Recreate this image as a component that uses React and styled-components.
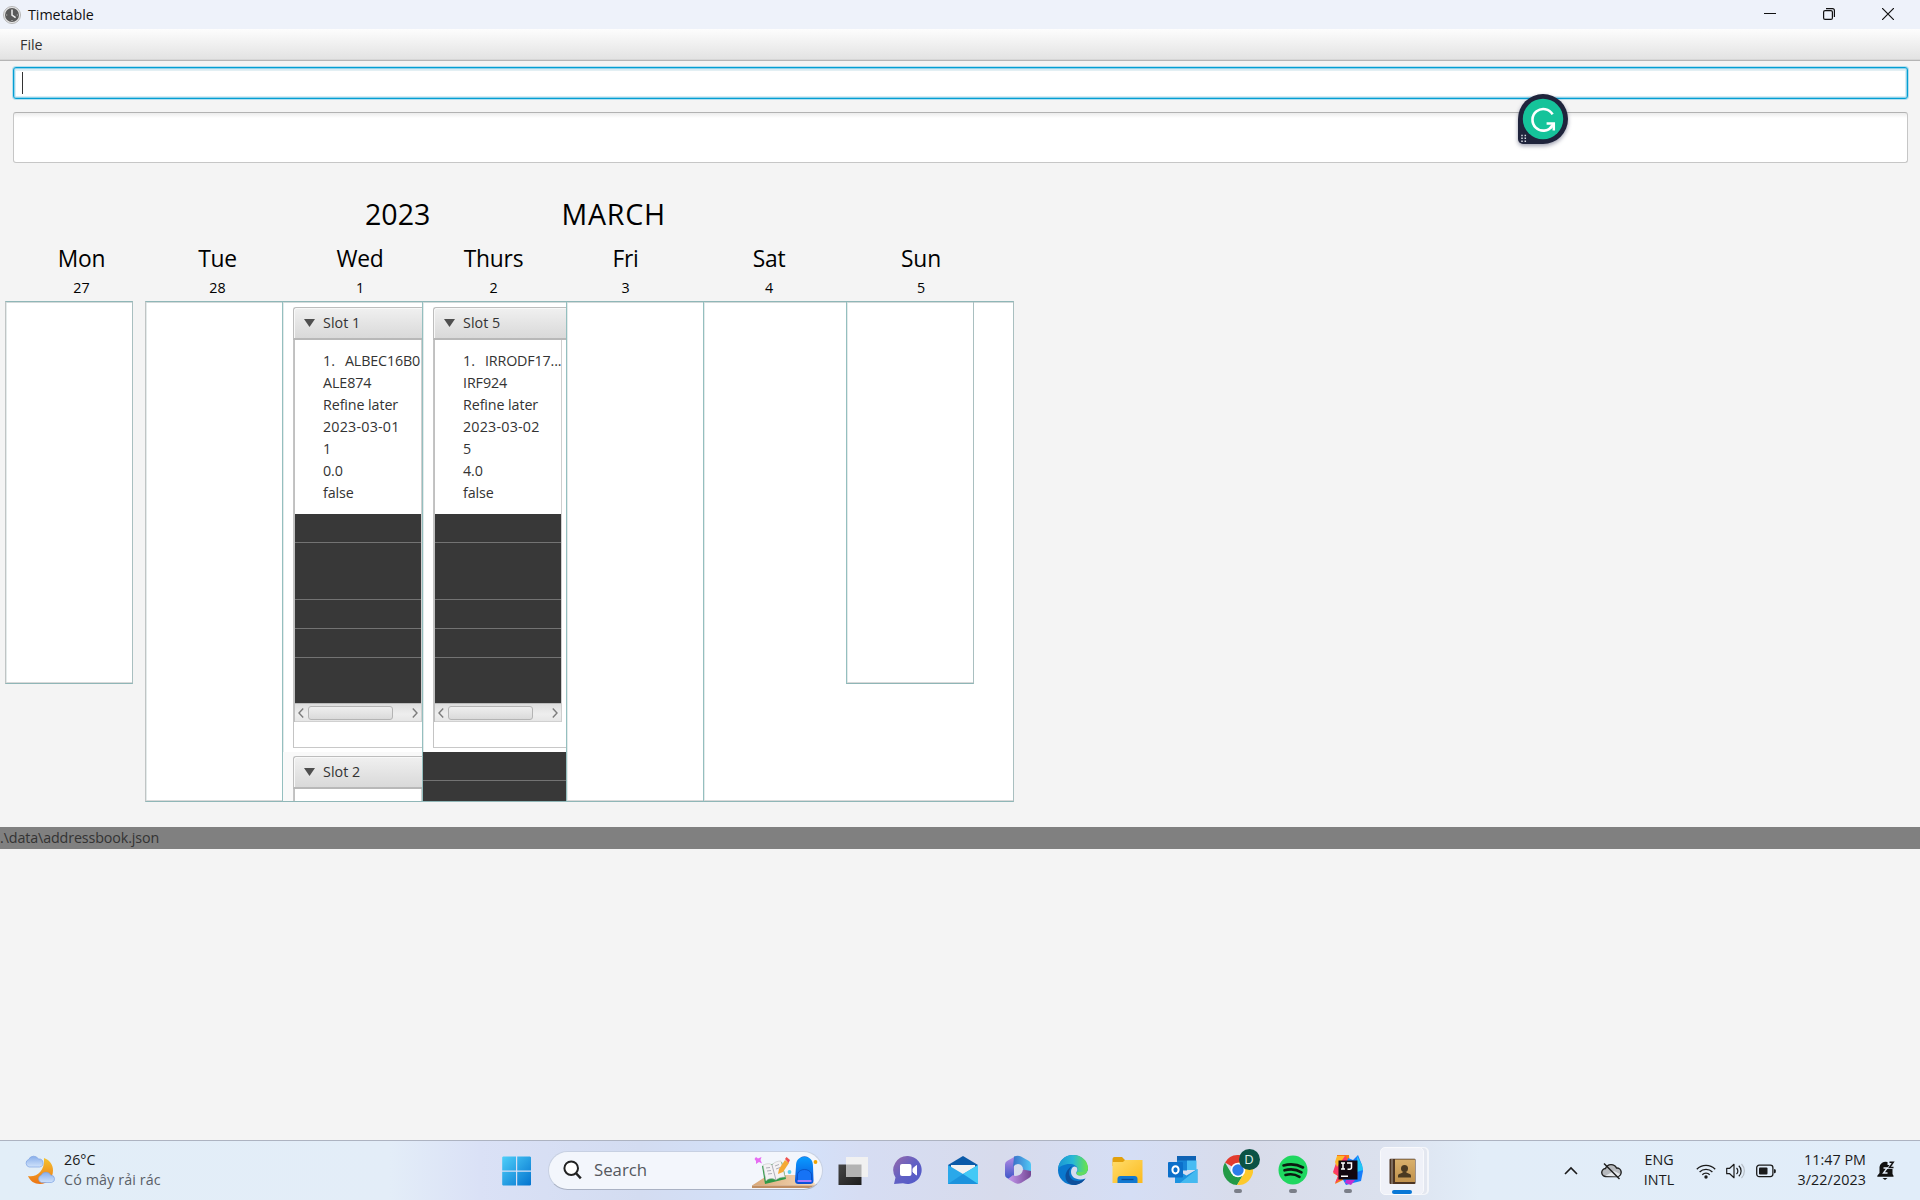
import React from "react";
import styled, { createGlobalStyle } from "styled-components";

const GlobalStyle = createGlobalStyle`
  * { box-sizing: border-box; }
  html, body { margin: 0; padding: 0; }
  body {
    background: #f4f4f4;
    font-family: "Open Sans", "Noto Sans", sans-serif;
    overflow: hidden;
  }
  svg { display: block; flex: none; }
`;

const Screen = styled.div`
  width: 1920px;
  height: 1200px;
  display: flex;
  flex-direction: column;
  background: #f4f4f4;
  color: #333;
`;

const Label = styled.span`
  font-size: ${(p) => p.$size || 14.3}px;
  letter-spacing: ${(p) => p.$ls || 0}px;
  line-height: ${(p) => p.$lh || 22}px;
  color: ${(p) => p.$color || "inherit"};
  white-space: pre;
`;

/* window chrome */
const TitleBar = styled.header`
  height: 29px;
  flex: none;
  display: flex;
  align-items: center;
  padding-left: 3px;
  gap: 7px;
  background: #eef2fa;
`;
const WindowButtons = styled.div`
  display: flex;
  gap: 47px;
  margin-left: auto;
  padding: 0 26px 1px 0;
  align-items: center;
`;
const MenuBar = styled.nav`
  height: 32px;
  flex: none;
  padding: 4px 20px 0;
  background: linear-gradient(#fdfdfd, #e2e2e2);
  border-bottom: 1px solid #b5b5b5;
  box-shadow: inset 0 -1px #d6d6d6;
`;
const CommandField = styled.div`
  height: 32px;
  flex: none;
  margin: 6px 12px 0 13px;
  padding: 4px 8px;
  border: 1px solid #039ed3;
  border-radius: 3px;
  background: #fff;
  box-shadow: 0 0 0 1px #b5dfee, inset 0 0 0 1px #8fd3ea, inset 0 0 0 2px #d9edf5,
    inset 0 3px 0 #e3eff3;
`;
const Caret = styled.div`
  width: 1px;
  height: 22px;
  background: #333;
`;
const ResultBox = styled.div`
  position: relative;
  height: 51px;
  flex: none;
  margin: 13px 12px 0 13px;
  border: 1px solid #c6c6c6;
  border-top-color: #b2b2b2;
  border-radius: 3px;
  background: linear-gradient(#ececec, #fff 5px);
`;
const AssistantBadge = styled.div`
  position: absolute;
  left: 1504px;
  top: -19px;
  filter: drop-shadow(0 2px 2px rgba(40, 45, 80, 0.45));
`;

/* calendar */
const Calendar = styled.main`
  height: 664px;
  flex: none;
  padding-top: 31px;
`;
const MonthRow = styled.div`
  display: flex;
  height: 50px;
  padding-left: 365px;
  gap: 131px;
  color: #000;
`;
const DayHeadings = styled.div`
  display: grid;
  grid-template-columns: 163px 109px 176px 91px 173px 114px 190px;
  height: 57px;
  color: #000;
`;
const DayHeading = styled.div`
  display: flex;
  flex-direction: column;
  align-items: center;
  gap: 3px;
`;
const Week = styled.div`
  display: flex;
  align-items: flex-start;
  padding-left: 5px;
`;
const DayList = styled.div`
  width: ${(p) => p.$w}px;
  height: ${(p) => (p.$short ? 383 : 501)}px;
  flex: none;
  overflow: hidden;
  margin-right: ${(p) => p.$gap || 0}px;
  padding-left: ${(p) => p.$pad || 0}px;
  background: #fff;
  border: 1px solid #8fb6b7;
  border-left-color: ${(p) => (p.$grey ? "#c0c4c4" : "#94bfbf")};
  border-right: ${(p) => (p.$end ? "1px solid #a9bfc0" : "none")};
  box-shadow: inset 0 1px #d3dada, inset 0 -1px #d9d9d9, inset 1px 0 #e3eaea;
`;
const SundaySlot = styled.div`
  margin-top: -1px;
`;
const Cell = styled.div`
  height: 450px;
  padding: 5px 0 0 10px;
`;
const NextCell = styled(Cell)`
  height: 60px;
  background: #f9f9f9;
  padding-top: 4px;
`;
const PaneTitle = styled.div`
  height: 33px;
  display: flex;
  align-items: center;
  gap: 8px;
  padding: 0 0 0 10px;
  border: 1px solid #bdbdbd;
  border-right: none;
  border-bottom: 2px solid #b8b8b8;
  border-radius: 3px 0 0 0;
  background: linear-gradient(#f0f0f0, #d9d9d9);
  box-shadow: inset 1px 1px #f8f8f8;
`;
const PaneBody = styled.div`
  height: ${(p) => p.$h || 408}px;
  border-left: 1px solid #c4c4c4;
  border-bottom: 1px solid #c8c8c8;
  background: #fff;
`;
const LessonList = styled.div`
  width: ${(p) => p.$w}px;
  border-left: 1px solid #c0c0c0;
  border-right: 1px solid #cfcfcf;
`;
const Lesson = styled.div`
  height: 174px;
  padding: 10px 0 0 28px;
  display: flex;
  flex-direction: column;
  overflow: hidden;
`;
const Course = styled.div`
  display: flex;
  gap: 10px;
`;
const DarkRow = styled.div`
  height: ${(p) => p.$h}px;
  background: #383838;
  border-bottom: ${(p) => (p.$last ? "none" : "1px solid #737373")};
`;
const ScrollTrack = styled.div`
  height: 19px;
  display: flex;
  align-items: center;
  padding: 0 3px;
  background: linear-gradient(#dedede, #eeeeee 60%, #e6e6e6);
  border-top: 1px solid #bbb;
  border-bottom: 1px solid #d0d0d0;
`;
const Thumb = styled.div`
  width: 85px;
  height: 14px;
  margin: 0 auto 0 4px;
  border: 1px solid #b4b4b4;
  border-radius: 3px;
  background: linear-gradient(#efefef, #dadada);
`;
const StatusBar = styled.footer`
  height: 22px;
  flex: none;
  background: #808080;
  display: flex;
`;

/* taskbar */
const Taskbar = styled.div`
  height: 60px;
  margin-top: auto;
  flex: none;
  display: flex;
  align-items: center;
  border-top: 1px solid #adb3c1;
  background: linear-gradient(
    90deg, #e2eef8 0, #e3edf8 390px, #dae1f6 480px, #d3dcf1 640px, #d3e2fb 790px,
    #d6ddf3 860px, #d7dbec 1000px, #d5def5 1130px, #d8dcea 1250px, #dbe1ee 1380px,
    #e2edf8 1480px, #e1edf9 1920px
  );
  color: #1b1b1b;
`;
const Weather = styled.div`
  width: 477px;
  display: flex;
  align-items: center;
  gap: 8px;
  padding: 0 0 2px 25px;
  margin-right: 25px;
`;
const Stack = styled.div`
  display: flex;
  flex-direction: column;
  align-items: ${(p) => p.$align || "flex-start"};
  width: ${(p) => (p.$w ? p.$w + "px" : "auto")};
  padding-bottom: ${(p) => (p.$w ? 2 : 0)}px;
`;
const SearchPill = styled.div`
  width: 275px;
  height: 39px;
  margin: 0 15px 1px 16px;
  padding-left: 14px;
  display: flex;
  align-items: center;
  gap: 12px;
  overflow: hidden;
  border-radius: 20px;
  border: 1px solid #c7d0e2;
  border-bottom-color: #aab2c4;
  background: #f3f6fc;
`;
const SearchArt = styled.div`
  margin-left: auto;
  align-self: flex-end;
`;
const Apps = styled.div`
  display: flex;
  align-items: center;
`;
const AppSlot = styled.div`
  width: 55px;
  height: 48px;
  display: flex;
  flex-direction: column;
  align-items: center;
  padding-top: 8px;
  gap: 4px;
`;
const RunDot = styled.div`
  width: 8px;
  height: 4px;
  border-radius: 2px;
  background: #7b7f89;
`;
const ActiveTile = styled.div`
  width: 44px;
  height: 48px;
  margin-left: 5px;
  display: flex;
  flex-direction: column;
  align-items: center;
  padding-top: 10px;
  border-radius: 5px;
  border: 1px solid #f8f9fc;
  background: #eff1f8;
  box-shadow: 4px 0 0 -1px #e3e7f0, 5px 0 0 0 #f4f6fa;
`;
const ActiveBar = styled.div`
  width: 20px;
  height: 4px;
  margin-top: auto;
  border-radius: 2px;
  background: #0877d6;
`;
const Tray = styled.div`
  margin-left: auto;
  padding-right: 25px;
  display: flex;
  align-items: center;
`;
const Gap = styled.div`
  width: ${(p) => p.$w}px;
`;

const ClockIcon = () => (
  <svg width="18" height="18" viewBox="0 0 18 18">
    <circle cx="9" cy="9" r="8.5" fill="#e9e9e9" stroke="#b4b4b4" />
    <circle cx="9" cy="9" r="7" fill="#5a5a5a" />
    <path d="M9 3.5V9l3.6 2.6" fill="none" stroke="#eee" strokeWidth="1.5" />
    <path d="M3.2 9h1M13.8 9h1M9 14v1" stroke="#ccc" />
  </svg>
);

const GrammarlyIcon = () => (
  <svg width="50" height="50" viewBox="0 0 50 50">
    <path d="M25 0a25 25 0 0 1 0 50H5a5 5 0 0 1-5-5V25A25 25 0 0 1 25 0z" fill="#1f243c" />
    <circle cx="25" cy="25" r="20.2" fill="#15c39a" />
    <path d="M34.6 20.4A10.8 10.8 0 1 0 34 32.2" fill="none" stroke="#fff" strokeWidth="2.6" />
    <path d="M28.6 29.6h7.2v6.8" fill="none" stroke="#fff" strokeWidth="2.5" />
    <path d="M35.4 30l-3.2 4" stroke="#fff" strokeWidth="2.5" />
    <path d="M4 40.7v8M7.3 40.7v8" stroke="#d8dae2" strokeWidth="1.5" strokeDasharray="1.5 1.4" />
  </svg>
);

const Arrow = () => (
  <svg width="11" height="8" viewBox="0 0 11 8"><path d="M0 0h11L5.5 8z" fill="#4f4f4f" /></svg>
);
const Chev = ({ right }) => (
  <svg width="6" height="10" viewBox="0 0 6 10">
    <path d={right ? "M.8 .5L5 5 .8 9.5" : "M5.2 .5L1 5l4.2 4.5"} fill="none" stroke="#7d7d7d" strokeWidth="1.4" />
  </svg>
);

const WeatherIcon = () => (
  <svg width="31" height="30" viewBox="0 0 31 30">
    <defs>
      <linearGradient id="moon" x1="0" y1="0" x2="0" y2="1"><stop offset="0" stopColor="#f5c331" /><stop offset="1" stopColor="#ec7414" /></linearGradient>
      <linearGradient id="cloud" x1="0" y1="0" x2="0" y2="1"><stop offset="0" stopColor="#88aeea" /><stop offset="1" stopColor="#cfe2fb" /></linearGradient>
    </defs>
    <path d="M19 3c6 2 9 7 9 12.500c0 8-6 13.500-13 13.500-5.500 0-10-3-12-8 8 1.500 17-4 16-18z" fill="url(#moon)" />
    <path d="M4 12a4 4 0 0 1-.3-7.600 5.500 5.500 0 0 1 9.800-.4 3.800 3.800 0 0 1 1 8z" fill="url(#cloud)" stroke="#7fa4e2" strokeWidth=".7" />
    <path d="M16.500 27.500a3.800 3.800 0 0 1-.3-7.300 5.300 5.300 0 0 1 9.500 0 3.700 3.700 0 0 1 1 7.300z" fill="url(#cloud)" stroke="#7fa4e2" strokeWidth=".7" />
  </svg>
);

const StartIcon = () => (
  <svg width="30" height="30" viewBox="0 0 30 30">
    <defs><linearGradient id="win" gradientUnits="userSpaceOnUse" x1="0" y1="0" x2="29" y2="29"><stop offset="0" stopColor="#4fd0fa" /><stop offset="1" stopColor="#0474cf" /></linearGradient></defs>
    <path d="M1 .5h13V14.500H.2V1.300zM15.200 .5H28l1 .8V14.500H15.200zM.2 15.700H14V29.500H1l-.8-.8zM15.200 15.700H29v13l-.8.8h-13z" fill="url(#win)" />
  </svg>
);

const SearchIcon = () => (
  <svg width="19" height="20" viewBox="0 0 19 20">
    <circle cx="8.200" cy="8.200" r="6.800" fill="#fff" stroke="#222" strokeWidth="2" />
    <path d="M12.800 13l5 5.300" stroke="#222" strokeWidth="2.500" />
  </svg>
);

const StudyArt = () => (
  <svg width="70" height="37" viewBox="0 0 70 37">
    <defs>
      <linearGradient id="desk"><stop offset="0" stopColor="#d9a877" /><stop offset="1" stopColor="#f6dcbc" /></linearGradient>
      <linearGradient id="bag" x1="0" y1="0" x2="0" y2="1"><stop offset="0" stopColor="#0a9bff" /><stop offset="1" stopColor="#0a4fd8" /></linearGradient>
    </defs>
    <path d="M0 33.500L16 23h38l11 10.500z" fill="url(#desk)" />
    <path d="M0 33.500h64l-4 2.500H0z" fill="#c08e62" />
    <path d="M10 14l20-4 4 17-21 5z" fill="#2f9a48" />
    <path d="M11 13c4-1.500 7-2 9 0 2-3 6-4 9-4l4 16c-4 0-7 1-9 3-4-2-7-2-10 1z" fill="#f4f2f4" stroke="#bbb" strokeWidth=".5" />
    <path d="M20 13l4 15M14 16l4-.5M15 19l4-.5M16 22l4-.5M23 14l4-1.500M24 17l4-1.500" stroke="#9c9ca8" strokeWidth=".8" />
    <path d="M26 22l1-5 6-9 4 3-6 9z" fill="#f5a935" /><path d="M33 7l1.500-2 3.500 3-1.500 3z" fill="#ef5350" />
    <path d="M4 5l2 1.500L9.500 5l-1 3 1.500 3.500L7 10l-3 2v-3L2.500 7z" fill="#e66cf2" />
    <path d="M48 8a5 5 0 0 1 9 0" fill="none" stroke="#2c67c9" strokeWidth="2" />
    <path d="M44 14c0-6 3-9 8.500-9s8.500 3 8.500 9l.5 14c0 3-1 4-4 4H47c-3 0-4-1-4-4z" fill="url(#bag)" />
    <path d="M45.500 22c2-6 12-6 14 0v7h-14z" fill="#1673f5" stroke="#0747b8" strokeWidth=".7" />
    <path d="M45.500 29h14" stroke="#a67cff" strokeWidth="2" />
    <circle cx="37.500" cy="20" r="1.900" fill="#59d0ec" /><circle cx="63.500" cy="10" r="1.900" fill="#f2a500" />
  </svg>
);

const TaskViewIcon = () => (
  <svg width="31" height="30" viewBox="0 0 31 30">
    <defs><linearGradient id="tv" x2="1" y2="1"><stop offset="0" stopColor="#454545" /><stop offset="1" stopColor="#1d1d1d" /></linearGradient></defs>
    <path d="M.5 8.500h23V29H.5z" fill="url(#tv)" />
    <path d="M8 1h22v20H8z" fill="#f1f1f1" />
    <path d="M8 8.500h15.500V21H8z" fill="#b3b3b3" />
  </svg>
);
const TeamsIcon = () => (
  <svg width="30" height="30" viewBox="0 0 30 30">
    <defs><linearGradient id="chat" x1="0" y1="0" x2="1" y2="1"><stop offset="0" stopColor="#9a6aa9" /><stop offset=".5" stopColor="#6160c4" /><stop offset="1" stopColor="#5059c9" /></linearGradient></defs>
    <path d="M15 1a14 14 0 1 1-5 27.200L1 29l1.500-6.500A14 14 0 0 1 15 1z" fill="url(#chat)" />
    <rect x="7" y="9" width="11.500" height="12" rx="2" fill="#fff" /><path d="M20 13.500l3.500-3v9.500L20 17z" fill="#fff" stroke="#fff" />
  </svg>
);
const MailIcon = () => (
  <svg width="30" height="30" viewBox="0 0 30 30">
    <path d="M0 10L15 1l15 9v6H0z" fill="#0b5aa8" /><path d="M3 10h24v7l-12 5-12-5z" fill="#f2f2f2" />
    <path d="M0 10l15 9 15-9v19H0z" fill="#2aa8ea" /><path d="M30 10L15 19l15 10z" fill="#43c9f6" /><path d="M0 29L15 19l15 10z" fill="#1687d6" opacity=".65" />
  </svg>
);
const OfficeIcon = () => (
  <svg width="28" height="30" viewBox="0 0 28 30">
    <defs>
      <linearGradient id="o1" x1="0" y1="0" x2="0" y2="1"><stop offset="0" stopColor="#b78be4" /><stop offset="1" stopColor="#3a55c8" /></linearGradient>
      <linearGradient id="o2"><stop offset="0" stopColor="#3a72c9" /><stop offset="1" stopColor="#50c8f5" /></linearGradient>
      <linearGradient id="o3"><stop offset="0" stopColor="#c69af0" /><stop offset="1" stopColor="#744693" /></linearGradient>
    </defs>
    <path d="M11 1.500L3 6Q1 7 1 9.500V20q0 2 2 3l3 1.500 4-3V10z" fill="url(#o1)" />
    <path d="M10 1.500Q14 0 17 1.500L25 6q2 1 2 3.500V18l-8-3.500q0-5-5-5.500-3 0-5 3z" fill="url(#o2)" />
    <path d="M27 16v4q0 2-2 3l-8 5q-3 1.500-6 0l-7-4 5-4q2 1.500 5 .5 4-1 5-6z" fill="url(#o3)" />
  </svg>
);
const EdgeIcon = () => (
  <svg width="30" height="30" viewBox="0 0 30 30">
    <defs><linearGradient id="e1"><stop offset="0" stopColor="#1b96d4" /><stop offset=".5" stopColor="#28b9d6" /><stop offset="1" stopColor="#6be544" /></linearGradient></defs>
    <circle cx="15" cy="15" r="15" fill="#0a78ce" />
    <path d="M0 14C1 5 7 0 15 0c9 0 15 6 15 13 0 5-4 7.500-8 7.500-3 0-4.500-1.500-3-3.500 2-4-1-7.500-6-8C7 8.500 2 11 0 14z" fill="url(#e1)" />
    <path d="M12 14c-3 7 2 13 9 12 3-.3 5-1.500 6.500-2.500C24 29 18 31 13 29.500 5 26 6 16 14 11z" fill="#0d4f9b" />
    <path d="M15 12c3-2 6 2 3.500 5-1.500 4 5 4.500 9.500 1.500L30 15v7l-2.500 1.500C20 26 13 23 13 17c0-2 .5-4 2-5z" fill="#d6dcee" />
    <path d="M19 17c-1 2 0 3.600 3 3.500 4 0 8-2.500 8-7.500l0 1c0 1-3 3-3 3z" fill="#62dc62" />
  </svg>
);
const ExplorerIcon = () => (
  <svg width="31" height="30" viewBox="0 0 31 30">
    <defs><linearGradient id="fold" x2="1" y2="1"><stop offset="0" stopColor="#ffdc6b" /><stop offset="1" stopColor="#fcba1c" /></linearGradient></defs>
    <path d="M.5 4q0-2 2-2H10l3 3h17v6H.5z" fill="#e2a00c" /><path d="M.5 7H11l2-2h17.500v23H.5z" fill="url(#fold)" />
    <path d="M5.500 28v-4q0-3 3-3h14q3 0 3 3v4z" fill="#1178d1" /><path d="M9.500 24.500h12" stroke="#084a94" strokeWidth="1.300" />
  </svg>
);
const OutlookIcon = () => (
  <svg width="30" height="30" viewBox="0 0 30 30">
    <path d="M9 1h19v14H9z" fill="#0f63b4" /><path d="M9 5.500h10v10H9z" fill="#1684d8" /><path d="M19 5.500h9.500V15H19z" fill="#49bcf3" />
    <path d="M7 14l11.500 6.500L29.500 14v14H7z" fill="#1c93e0" /><path d="M29.500 14L12 28h17.500z" fill="#52c5f5" opacity=".75" />
    <rect x="0" y="7" width="15" height="15.500" rx="1" fill="#0b6fca" />
    <ellipse cx="7.500" cy="14.800" rx="3.100" ry="3.600" fill="none" stroke="#fff" strokeWidth="2" />
  </svg>
);
const BadgeHolder = styled.div`
  position: relative;
`;
const ProfileBadge = styled.div`
  position: absolute;
  left: 16px;
  top: -6px;
  width: 21px;
  height: 21px;
  border-radius: 50%;
  display: flex;
  justify-content: center;
  background: #0b5345;
`;
const ChromeIcon = () => (
  <svg width="30" height="30" viewBox="0 0 30 30">
    <path d="M15 15L2 7.500A15 15 0 0 1 28 7.500L28.500 8z" fill="#e33b2e" /><path d="M2 7.500A15 15 0 0 0 14 30l7-11.500L8.500 18.500z" fill="#239a47" />
    <path d="M28 7.500H15l6 11L14 30A15 15 0 0 0 28 7.500z" fill="#fdc92c" />
    <circle cx="15" cy="15" r="7.300" fill="#fff" /><circle cx="15" cy="15" r="5.700" fill="#2d7de9" />
  </svg>
);
const SpotifyIcon = () => (
  <svg width="30" height="30" viewBox="0 0 30 30">
    <circle cx="15" cy="15" r="14.500" fill="#1fd760" />
    <path d="M5.500 10.500c7-2 14-1 19.500 2M6.500 15.300c6-1.700 12-1 17 2M7.500 20c5-1.300 10-.6 14 1.800" fill="none" stroke="#0b1a10" strokeWidth="2.600" strokeLinecap="round" />
  </svg>
);
const IntelliJIcon = () => (
  <svg width="30" height="30" viewBox="0 0 30 30">
    <path d="M4 0h12l2 26-8-1-8 4 3-8-5-3 4-4z" fill="#f97a12" /><path d="M3 8L12 0l4 8-6 14-8 6 3-7-5-4z" fill="#fb3b68" /><path d="M4 1h8l-8 11-2-5z" fill="#fdb82b" />
    <path d="M15 3l5 2 5-5 4 10 1 6-2 10-8 2-7 2-4-7z" fill="#167dfb" /><path d="M24 1l5 9 1 5-6 2z" fill="#21c6f4" /><path d="M13 25h9l-4 5-6-2z" fill="#c22ed0" />
    <rect x="5.500" y="5.500" width="19" height="19" fill="#120811" />
    <path d="M8 8h4M10 8v6M8 14h4M14 8h4.500v4.500q0 1.700-2 1.700H14.500M8 21.300h7" fill="none" stroke="#fff" strokeWidth="1.500" />
  </svg>
);
const BookIcon = () => (
  <svg width="27" height="27" viewBox="0 0 27 27">
    <defs><linearGradient id="bk" x1="0" y1="0" x2="0" y2="1"><stop offset="0" stopColor="#d9b06c" /><stop offset="1" stopColor="#c1924d" /></linearGradient></defs>
    <rect x=".5" y=".7" width="26" height="25.300" rx="1" fill="#4d3523" /><rect x="6" y="1.500" width="20" height="22.500" fill="url(#bk)" />
    <path d="M3 1v25" stroke="#7c6a5c" strokeWidth="2" />
    <circle cx="15.500" cy="10.500" r="3.500" fill="#4b3a22" /><path d="M9 19.500v-2q0-1.500 2.500-2 2.500-.5 2.500-2h3q0 1.500 2.500 2t2.500 2v2z" fill="#4b3a22" />
  </svg>
);

const OneDriveOff = () => (
  <svg width="21" height="18" viewBox="0 0 21 18">
    <path d="M5 14.500a4 4 0 0 1-.5-8A6 6 0 0 1 15.500 6a4.200 4.200 0 0 1 .8 8.500z" fill="#b6b9bd" stroke="#222" strokeWidth="1.400" />
    <path d="M4 14l9-5 6 3-2 2.500z" fill="#e6e9ec" /><path d="M3 1.500L18.500 17" stroke="#1b1b1b" strokeWidth="1.400" />
  </svg>
);
const WifiIcon = () => (
  <svg width="20" height="16" viewBox="0 0 20 16">
    <path d="M.8 6.200a13 13 0 0 1 18.400 0M3.600 9a9 9 0 0 1 12.800 0M6.300 11.700a5.200 5.200 0 0 1 7.400 0" fill="none" stroke="#1b1b1b" strokeWidth="1.300" />
    <circle cx="10" cy="14" r="1.700" fill="#1b1b1b" />
  </svg>
);
const SpeakerIcon = () => (
  <svg width="21" height="16" viewBox="0 0 21 16">
    <path d="M.7 5.300h3L8 1.300v13.400l-4.300-4h-3z" fill="none" stroke="#1b1b1b" strokeWidth="1.200" strokeLinejoin="round" />
    <path d="M10.500 5a4 4 0 0 1 0 6M12.800 2.800a7 7 0 0 1 0 10.400" fill="none" stroke="#1b1b1b" strokeWidth="1.200" />
    <path d="M15.500 1a10 10 0 0 1 0 14" fill="none" stroke="#b7bec6" strokeWidth="1.200" />
  </svg>
);
const BatteryIcon = () => (
  <svg width="20" height="14" viewBox="0 0 20 14">
    <rect x=".7" y="1.200" width="16.200" height="11.400" rx="2.500" fill="none" stroke="#1b1b1b" strokeWidth="1.300" />
    <rect x="3" y="3.600" width="8.500" height="6.800" rx="1" fill="#1b1b1b" /><path d="M18 5l1.800.8v2.600L18 9.500z" fill="#1b1b1b" />
  </svg>
);
const BellIcon = () => (
  <svg width="18" height="20" viewBox="0 0 18 20">
    <path d="M2.500 6a6 5.500 0 0 1 8-5v3h5v9l1 1.800v1H.3v-1L2.500 12z" fill="#111" /><path d="M5.500 17h5l-2.500 2z" fill="#111" />
    <path d="M12.500 1.300h3.700l-3.700 5.200h4" fill="none" stroke="#e4edf8" strokeWidth="3" />
    <path d="M6.500 7h3.700l-3.700 5h4" fill="none" stroke="#e4edf8" strokeWidth="1.400" /><path d="M12.500 1.300h3.700l-3.700 5.200h4" fill="none" stroke="#111" strokeWidth="1.500" />
  </svg>
);

const DAYS = [
  ["Mon", "27"], ["Tue", "28"], ["Wed", "1"], ["Thurs", "2"], ["Fri", "3"], ["Sat", "4"], ["Sun", "5"],
];

function Slot({ title, course, lines, width }) {
  return (
    <Cell>
      <PaneTitle><Arrow /><Label $ls={0.05}>{title}</Label></PaneTitle>
      <PaneBody>
        <LessonList $w={width}>
          <Lesson>
            <Course><Label>1.</Label><Label $ls={-0.15}>{course}</Label></Course>
            {lines.map((l, i) => <Label key={i} $ls={l.includes("-") ? 0.2 : -0.1}>{l}</Label>)}
          </Lesson>
          <DarkRow $h={29} />
          <DarkRow $h={57} />
          <DarkRow $h={29} />
          <DarkRow $h={29} />
          <DarkRow $h={45} $last />
          <ScrollTrack><Chev /><Thumb /><Chev right /></ScrollTrack>
        </LessonList>
      </PaneBody>
    </Cell>
  );
}

export default function App() {
  return (
    <Screen>
      <GlobalStyle />
      <TitleBar>
        <ClockIcon />
        <Label $color="#111" $ls={-0.05}>Timetable</Label>
        <WindowButtons>
          <svg width="12" height="12"><path d="M0 5.500h12" stroke="#111" /></svg>
          <svg width="12" height="12" viewBox="0 0 12 12" fill="none" stroke="#111" strokeWidth="1.200">
            <rect x=".6" y="2.600" width="8.800" height="8.800" rx="1.500" /><path d="M3 .6h6.500q1.900 0 1.900 1.900V9" />
          </svg>
          <svg width="12" height="12"><path d="M0 0l12 12M12 0L0 12" stroke="#111" strokeWidth="1.200" /></svg>
        </WindowButtons>
      </TitleBar>
      <MenuBar><Label>File</Label></MenuBar>
      <CommandField><Caret /></CommandField>
      <ResultBox><AssistantBadge><GrammarlyIcon /></AssistantBadge></ResultBox>
      <Calendar>
        <MonthRow>
          <Label $size={28.6} $lh={40}>2023</Label>
          <Label $size={28.6} $lh={40} $ls={0.8}>MARCH</Label>
        </MonthRow>
        <DayHeadings>
          {DAYS.map(([name, date]) => (
            <DayHeading key={name}>
              <Label $size={22.8} $lh={30} $ls={-0.2}>{name}</Label>
              <Label>{date}</Label>
            </DayHeading>
          ))}
        </DayHeadings>
        <Week>
          <DayList $w={128} $short $grey $end $gap={12} />
          <DayList $w={137} $grey />
          <DayList $w={140}>
            <Slot title="Slot 1" course="ALBEC16B0" width={128} lines={["ALE874", "Refine later", "2023-03-01", "1", "0.0", "false"]} />
            <NextCell>
              <PaneTitle><Arrow /><Label $ls={0.05}>Slot 2</Label></PaneTitle>
              <PaneBody $h={40}><LessonList $w={128}><Lesson /></LessonList></PaneBody>
            </NextCell>
          </DayList>
          <DayList $w={144}>
            <Slot title="Slot 5" course="IRRODF17..." width={128} lines={["IRF924", "Refine later", "2023-03-02", "5", "4.0", "false"]} />
            <DarkRow $h={29} />
            <DarkRow $h={29} $last />
          </DayList>
          <DayList $w={137} />
          <DayList $w={311} $pad={142} $end>
            <SundaySlot><DayList $w={128} $short $end /></SundaySlot>
          </DayList>
        </Week>
      </Calendar>
      <StatusBar><Label $ls={-0.12}>.\data\addressbook.json</Label></StatusBar>
      <Taskbar>
        <Weather>
          <WeatherIcon />
          <Stack>
            <Label $lh={20}>26°C</Label>
            <Label $lh={20} $ls={0.12} $color="#5a6068">Có mây rải rác</Label>
          </Stack>
        </Weather>
        <StartIcon />
        <SearchPill>
          <SearchIcon />
          <Label $size={16.800} $color="#55585e">Search</Label>
          <SearchArt><StudyArt /></SearchArt>
        </SearchPill>
        <Apps>
          <TaskViewIcon />
          <Gap $w={11} />
          <AppSlot><TeamsIcon /></AppSlot>
          <AppSlot><MailIcon /></AppSlot>
          <AppSlot><OfficeIcon /></AppSlot>
          <AppSlot><EdgeIcon /></AppSlot>
          <AppSlot><ExplorerIcon /></AppSlot>
          <AppSlot><OutlookIcon /></AppSlot>
          <AppSlot>
            <BadgeHolder>
              <ChromeIcon />
              <ProfileBadge><Label $size={13} $lh={20} $color="#dfeeea">D</Label></ProfileBadge>
            </BadgeHolder>
            <RunDot />
          </AppSlot>
          <AppSlot><SpotifyIcon /><RunDot /></AppSlot>
          <AppSlot><IntelliJIcon /><RunDot /></AppSlot>
          <ActiveTile><BookIcon /><ActiveBar /></ActiveTile>
        </Apps>
        <Tray>
          <svg width="14" height="9" viewBox="0 0 14 9"><path d="M1 8l6-6 6 6" fill="none" stroke="#1b1b1b" strokeWidth="1.600" /></svg>
          <Gap $w={23} />
          <OneDriveOff />
          <Gap $w={17} />
          <Stack $w={40} $align="center"><Label $lh={20}>ENG</Label><Label $lh={20} $ls={0.1}>INTL</Label></Stack>
          <Gap $w={17} />
          <WifiIcon />
          <Gap $w={10} />
          <SpeakerIcon />
          <Gap $w={9} />
          <BatteryIcon />
          <Stack $w={90} $align="flex-end"><Label $lh={20} $ls={0.05}>11:47 PM</Label><Label $lh={20} $ls={0.1}>3/22/2023</Label></Stack>
          <Gap $w={11} />
          <BellIcon />
        </Tray>
      </Taskbar>
    </Screen>
  );
}
